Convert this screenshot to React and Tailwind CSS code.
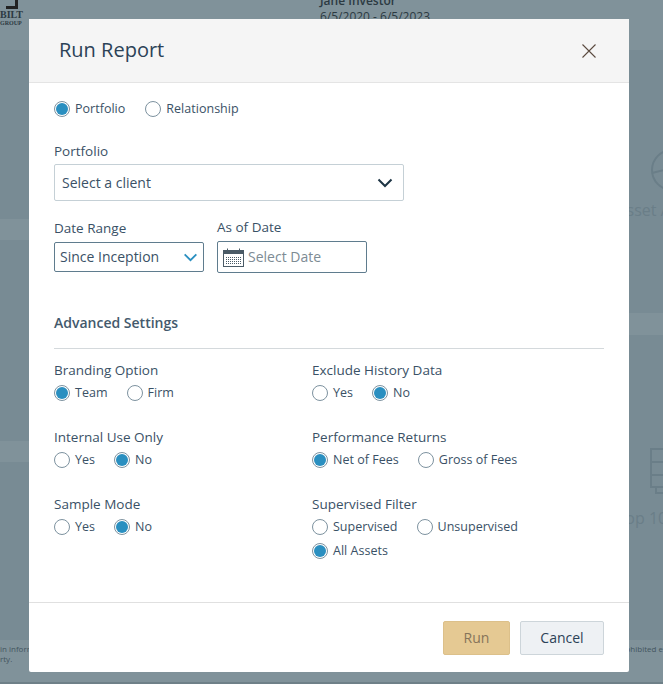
import React from 'react';

const FONT = { fontFamily: '"Open Sans", sans-serif' };

function Radio({ label, checked, className = '' }) {
  return (
    <label className={`flex items-center gap-[5px] ${className}`}>
      <span className="flex h-4 w-4 shrink-0 items-center justify-center rounded-full border border-[#7d929f] bg-white">
        {checked && <span className="h-3 w-3 rounded-full bg-[#2a8fc0]"></span>}
      </span>
      <span className="text-[12.5px] leading-4 tracking-[0.02px] text-[#3a5166]">{label}</span>
    </label>
  );
}

function Group({ title, children }) {
  return (
    <div className="h-[67px]">
      <div className="text-[13.5px] leading-[18px] text-[#3a5166]">{title}</div>
      <div className="mt-[6px] flex flex-wrap gap-x-[19px] gap-y-2">{children}</div>
    </div>
  );
}

function Chevron({ className }) {
  return (
    <svg viewBox="0 0 16 10" fill="none" className={className} strokeWidth="2">
      <path d="M1.500 1.500 8 8l6.500-6.500" stroke="currentColor" />
    </svg>
  );
}

function CalendarIcon() {
  return (
    <svg width="21" height="19" viewBox="0 0 21 19" fill="none" stroke="#4a5a66" className="shrink-0">
      <rect x="0.5" y="2.500" width="20" height="16" fill="#fff" />
      <rect x="1" y="3" width="19" height="3" fill="#4a5a66" stroke="none" />
      <path d="M4.500 0.500v3M16.500 0.500v3" />
      <path d="M3 9.500h15M3 11.500h15M3 13.500h15M3 15.500h15" strokeDasharray="1 1" />
    </svg>
  );
}

function Backdrop() {
  return (
    <div className="flex h-[684px] flex-col overflow-hidden bg-[#80929a]">
      <div className="flex h-[50px] shrink-0 text-[#2c3a42]">
        <div className="w-[320px]">
          <div className="w-[19px] font-['Liberation_Serif'] leading-none">
            <div className="ml-[6px] h-[9px] w-[12px] border-b-[3px] border-r-[3px] border-[#222]"></div>
            <div className="mt-[1px] text-[10px] font-bold">BILT</div>
            <div className="text-[6px] font-bold">GROUP</div>
          </div>
        </div>
        <div className="-mt-[7px] text-[12px] leading-4">
          <div className="font-semibold">Jane Investor</div>
          <div>6/5/2020 - 6/5/2023</div>
        </div>
      </div>
      <div className="flex h-[590px] shrink-0">
        <div className="flex w-1/2 flex-col">
          <div className="h-[169px] bg-[#788b94]"></div>
          <div className="mt-[21px] h-[201px] bg-[#788b94]"></div>
          <div className="mt-[21px] h-[178px] bg-[#788b94]"></div>
        </div>
        <div className="flex w-1/2 flex-col">
          <div className="h-[263px] overflow-hidden bg-[#788b94] pl-[285px] pt-[98px] text-[#6a7e88]">
            <svg width="48" height="44" viewBox="0 0 48 44" fill="none" stroke="currentColor" strokeWidth="2" className="ml-[33px]">
              <circle cx="22" cy="22" r="20" />
              <path d="M2 25 22 20l20 4" />
            </svg>
            <div className="mt-[6px] whitespace-nowrap text-[16px]">Asset Allocation</div>
          </div>
          <div className="mt-[22px] h-[305px] overflow-hidden bg-[#788b94] pl-[285px] pt-[113px] text-[#6a7e88]">
            <svg width="48" height="46" viewBox="0 0 48 46" fill="none" stroke="currentColor" strokeWidth="2" className="ml-[33px]">
              <path d="M1 1h46v38H1zM1 14h46M1 27h46M6 39v6h36" />
            </svg>
            <div className="mt-[12px] whitespace-nowrap text-[16px]">Top 10 Holdings</div>
          </div>
        </div>
      </div>
      <div className="flex flex-1 justify-between pt-1 text-[8px] leading-[10px] text-[#43555f]">
        <div>in information<br />rty.</div>
        <div>prohibited e</div>
      </div>
      <div className="h-[2px] shrink-0 bg-[#6e8088]"></div>
    </div>
  );
}

export default function App() {
  return (
    <div className="relative h-[684px] w-[663px] overflow-hidden" style={FONT}>
      <Backdrop />

      {/* Run Report modal */}
      <div className="absolute left-[29px] top-[19px] flex h-[653px] w-[600px] flex-col rounded-[2px] bg-white">
        <div className="flex h-[64px] shrink-0 items-center justify-between border-b border-[#e4e4e4] bg-[#f5f5f5] pl-[30px] pr-[32px]">
          <h2 className="pb-[2px] text-[20px] leading-7 text-[#2c4257]">Run Report</h2>
          <svg width="16" height="16" viewBox="0 0 16 16" fill="none" stroke="#5b4a3f" strokeWidth="1.100">
            <path d="M1.500 1.500l13 13M14.500 1.500l-13 13" />
          </svg>
        </div>

        <div className="flex-1 pl-[25px] pr-[25px] pt-[18px]">
          <div className="flex gap-5">
            <Radio label="Portfolio" checked />
            <Radio label="Relationship" />
          </div>

          <div className="mt-[25px] text-[13.5px] leading-[18px] text-[#3a5166]">Portfolio</div>
          <div className="mt-1 flex h-[37px] w-[350px] items-center justify-between rounded-[2px] border border-[#c5d0d6] pl-[7px] pr-[10px]">
            <span className="text-[14px] text-[#3a5166]">Select a client</span>
            <Chevron className="h-[10px] w-[16px] text-[#1d3444]" />
          </div>

          <div className="mt-[18px] flex items-start gap-[13px]">
            <div>
              <div className="text-[13.5px] leading-[18px] text-[#3a5166]">Date Range</div>
              <div className="mt-[5px] flex h-[30px] w-[150px] items-center justify-between rounded-[2px] border border-[#5f7c8e] pl-[5px] pr-[5px]">
                <span className="pb-[1px] text-[14px] text-[#3a5166]">Since Inception</span>
                <Chevron className="h-[9px] w-[15px] text-[#2a8fc0]" />
              </div>
            </div>
            <div className="-mt-[1px]">
              <div className="text-[13.5px] leading-[18px] text-[#3a5166]">As of Date</div>
              <div className="mt-[5px] flex h-[32px] w-[150px] items-center gap-[4px] rounded-[2px] border border-[#5f7c8e] pl-[5px]">
                <CalendarIcon />
                <span className="pb-[1px] text-[14px] text-[#7d8b94]">Select Date</span>
              </div>
            </div>
          </div>

          <div className="mt-[40px] text-[14px] font-semibold leading-5 text-[#43596c]">Advanced Settings</div>
          <div className="mt-[15px] border-t border-[#d4d9dc]"></div>

          <div className="mt-[12px] grid grid-cols-[258px_1fr]">
            <Group title="Branding Option">
              <Radio label="Team" checked />
              <Radio label="Firm" />
            </Group>
            <Group title="Exclude History Data">
              <Radio label="Yes" />
              <Radio label="No" checked />
            </Group>
            <Group title="Internal Use Only">
              <Radio label="Yes" />
              <Radio label="No" checked />
            </Group>
            <Group title="Performance Returns">
              <Radio label="Net of Fees" checked />
              <Radio label="Gross of Fees" />
            </Group>
            <Group title="Sample Mode">
              <Radio label="Yes" />
              <Radio label="No" checked />
            </Group>
            <Group title="Supervised Filter">
              <Radio label="Supervised" />
              <Radio label="Unsupervised" />
              <Radio label="All Assets" checked className="w-full" />
            </Group>
          </div>
        </div>

        <div className="flex h-[70px] shrink-0 items-center justify-end gap-[10px] border-t border-[#e0e0e0] pr-[25px]">
          <button className="h-[34px] w-[67px] rounded-[2px] border border-[#dcc08a] bg-[#e5c993] text-[14px] text-[#85745a]">Run</button>
          <button className="h-[34px] w-[84px] rounded-[2px] border border-[#cdd5da] bg-[#eef1f4] text-[14px] text-[#2c4257]">Cancel</button>
        </div>
      </div>
    </div>
  );
}
